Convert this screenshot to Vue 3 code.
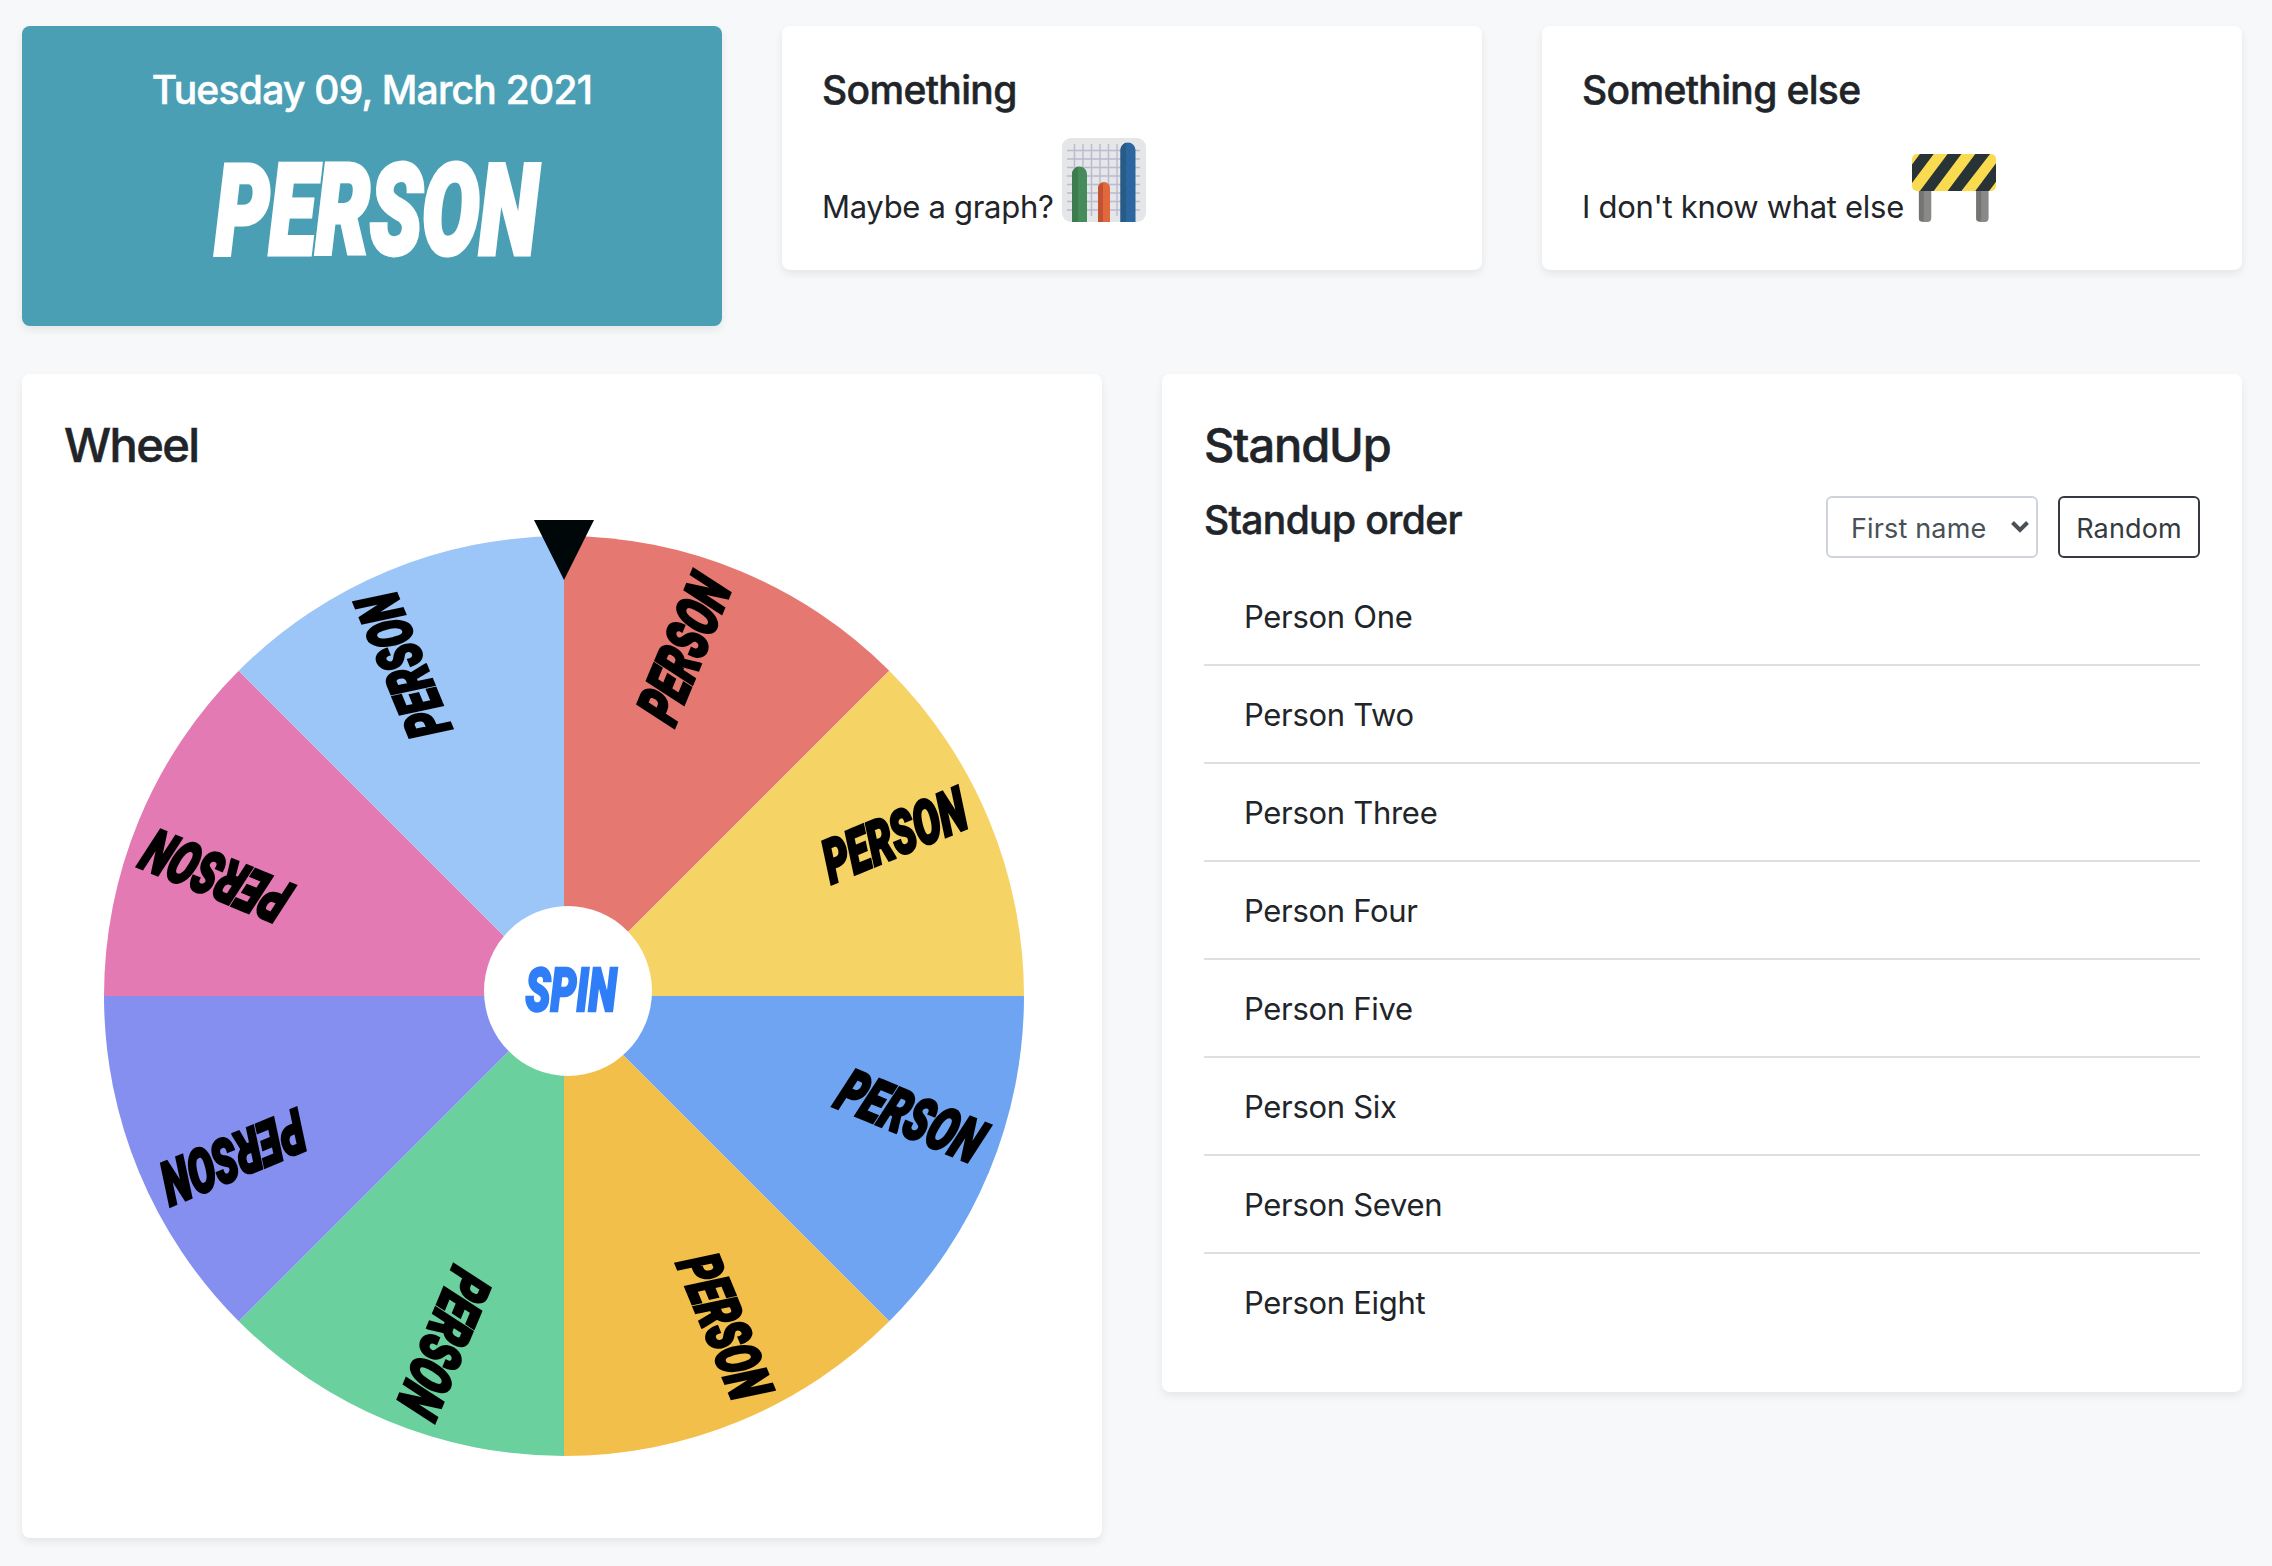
<script setup>
const standup = ['One', 'Two', 'Three', 'Four', 'Five', 'Six', 'Seven', 'Eight'].map((n) => `Person ${n}`)

const colors = ['#e67872', '#f5d364', '#6ea4f2', '#f2bf4a', '#6ad09d', '#848ff0', '#e37ab3', '#9cc6f8']
const RADIUS = 460
const point = (deg) => {
  const a = (deg * Math.PI) / 180
  return `${(RADIUS * Math.sin(a)).toFixed(2)} ${(-RADIUS * Math.cos(a)).toFixed(2)}`
}
const slices = colors.map((color, i) => ({
  color,
  path: `M0 0 L${point(i * 45)} A${RADIUS} ${RADIUS} 0 0 1 ${point(i * 45 + 45)} Z`,
  turn: i * 45 - 67.5,
}))
</script>

<template>
  <main class="board">
    <section class="row thirds">
      <article class="card date-card">
        <h5 class="date">Tuesday 09, March 2021</h5>
        <svg class="winner" width="340" height="110" viewBox="0 0 340 110">
          <text x="13" y="98" font-size="125" textLength="323" lengthAdjust="spacingAndGlyphs">PERSON</text>
        </svg>
      </article>
      <article class="card small">
        <h5>Something</h5>
        <p>
          <span>Maybe a graph?</span>
          <svg class="emoji" width="84" height="84" viewBox="0 0 84 84">
            <rect width="84" height="84" rx="9" fill="#e5e6e8" />
            <path d="M12.500 6V78M21 6V78M29.500 6V78M38 6V78M46.500 6V78M55 6V78M5 12.500H78M5 21H78M5 29.500H78M5 38H78M5 46.500H78M5 55H78M5 63.500H78M5 72H78" stroke="#b9b9d0" stroke-width="1.400" />
            <path d="M10 84V36a7.500 7.500 0 0 1 15 0V84z" fill="#468c5b" />
            <path d="M10 84V36q0-5 6-7.500V84z" fill="#3d7c4e" />
            <path d="M36 84V50a6 6 0 0 1 12 0V84z" fill="#e1673c" />
            <path d="M36 84V50q0-4 5-5.500V84z" fill="#c25133" />
            <path d="M58.500 84V12a7.500 7.500 0 0 1 15 0V84z" fill="#2c66a0" />
            <path d="M58.500 84V12q0-5 5.500-7.500V84z" fill="#285b85" />
          </svg>
        </p>
      </article>
      <article class="card small">
        <h5>Something else</h5>
        <p>
          <span>I don't know what else</span>
          <svg class="emoji barrier" width="84" height="68" viewBox="0 0 85 68" preserveAspectRatio="none">
            <defs><clipPath id="plank"><rect width="85" height="37" rx="5" /></clipPath></defs>
            <rect x="7" y="30" width="12.500" height="38" rx="4" fill="#898987" />
            <rect x="7" y="34" width="5" height="33" rx="2" fill="#747472" />
            <rect x="65" y="30" width="12.500" height="38" rx="4" fill="#898987" />
            <rect x="65" y="34" width="5" height="33" rx="2" fill="#747472" />
            <g clip-path="url(#plank)">
              <rect width="85" height="37" fill="#fadb4f" />
              <path d="M-20 37L8 0H22L-6 37zM8 37L36 0H50L22 37zM36 37L64 0H79L50 37zM64 37L92 0H106L78 37z" fill="#273336" />
            </g>
          </svg>
        </p>
      </article>
    </section>

    <section class="row halves">
      <article class="card panel wheel-card">
        <h4>Wheel</h4>
        <div class="wheel">
          <svg width="920" height="940" viewBox="-460 -480 920 940">
            <path v-for="s in slices" :key="s.color" :d="s.path" :fill="s.color" />
            <g v-for="s in slices" :key="s.turn" :transform="`rotate(${s.turn}) skewX(-4)`">
              <text class="label" x="289.500" y="-1" font-size="60" textLength="151" lengthAdjust="spacingAndGlyphs">PERSON</text>
            </g>
            <path d="M-30 -476H30L0 -416z" fill="#000709" />
            <ellipse cx="4" cy="-5" rx="84" ry="85" fill="#fff" />
            <text class="spin" x="-38.500" y="14.500" font-size="60" textLength="91" lengthAdjust="spacingAndGlyphs">SPIN</text>
          </svg>
        </div>
      </article>
      <article class="card panel">
        <h4 class="standup-title">StandUp</h4>
        <div class="toolbar">
          <h5>Standup order</h5>
          <div class="controls">
            <button class="select">
              <span>First name</span>
              <svg width="20" height="14" viewBox="0 0 20 14"><path d="M2.500 2.500L10 10L17.500 2.500" fill="none" stroke="#495057" stroke-width="4" /></svg>
            </button>
            <button class="random"><span>Random</span></button>
          </div>
        </div>
        <ul>
          <li v-for="name in standup" :key="name">{{ name }}</li>
        </ul>
      </article>
    </section>
  </main>
</template>

<style>
body {
  background: #f7f8fa;
}
</style>

<style scoped>
.board {
  box-sizing: border-box;
  width: 2272px;
  height: 1566px;
  padding: 26px 30px 0 22px;
  display: flex;
  flex-direction: column;
  gap: 48px;
  overflow: hidden;
  background: #f7f8fa;
  color: #212529;
  font: 400 31px/48px Inter, "Liberation Sans", sans-serif;
  letter-spacing: -0.3px;
}
.row {
  display: grid;
  gap: 60px;
  align-items: start;
}
.thirds {
  grid-template-columns: repeat(3, 1fr);
}
.halves {
  grid-template-columns: repeat(2, 1fr);
}
.card {
  box-sizing: border-box;
  background: #fff;
  border-radius: 8px;
  box-shadow: 0 4px 8px rgba(0, 0, 0, 0.075);
}
h4, h5, p, ul {
  margin: 0;
  padding: 0;
}
h4, h5 {
  font-weight: 500;
  -webkit-text-stroke: 0.5px currentColor;
}
h5 {
  font-size: 39px;
  line-height: 48px;
  letter-spacing: -0.65px;
}
.date {
  letter-spacing: -0.75px;
}
h4 {
  font-size: 47px;
  line-height: 58px;
  letter-spacing: -1.600px;
}
.standup-title {
  letter-spacing: -1.100px;
}
.small {
  height: 244px;
  padding: 40px;
}
.small p {
  display: flex;
  align-items: flex-end;
  gap: 9px;
  height: 108px;
}
.small p span {
  margin-bottom: -9px;
}
.barrier {
  margin-left: -1px;
}
.date-card {
  height: 300px;
  padding-top: 40px;
  display: flex;
  flex-direction: column;
  align-items: center;
  background: #4a9fb5;
  color: #fff;
}
svg {
  overflow: visible;
}
.winner {
  margin-top: 42px;
}
svg text {
  font-family: Roboto, sans-serif;
  font-weight: 900;
  font-style: italic;
  letter-spacing: 0;
}
.winner text {
  fill: #fff;
  stroke: #fff;
  stroke-width: 5px;
}
.label {
  fill: #000;
  stroke: #000;
  stroke-width: 3px;
}
.spin {
  fill: #2f7ef7;
  stroke: #2f7ef7;
  stroke-width: 2.500px;
}
.panel {
  padding: 42px;
}
.wheel-card {
  height: 1164px;
}
.wheel {
  margin: 42px 0 0 40px;
}
.wheel svg {
  display: block;
}
.toolbar {
  display: flex;
  justify-content: space-between;
  align-items: flex-start;
  height: 72px;
  margin-top: 22px;
}
.controls {
  display: flex;
  gap: 20px;
}
button {
  box-sizing: border-box;
  height: 62px;
  padding: 2px 0 0;
  display: flex;
  align-items: center;
  background: #fff;
  border: 2px solid #ced4da;
  border-radius: 6px;
  color: #495057;
  font: 400 27px/40px Inter, sans-serif;
  letter-spacing: 0.15px;
}
.select {
  width: 212px;
  padding: 3px 6px 0 23px;
  justify-content: space-between;
}
.select svg {
  margin-bottom: 3px;
}
.random {
  width: 142px;
  padding-top: 3px;
  justify-content: center;
  border-color: #343a40;
  color: #343a40;
}
ul {
  list-style: none;
}
li {
  box-sizing: border-box;
  height: 98px;
  padding: 25px 40px 0;
  border-bottom: 2px solid #dfdfdf;
}
li:last-child {
  height: 96px;
  border-bottom: 0;
}
</style>
